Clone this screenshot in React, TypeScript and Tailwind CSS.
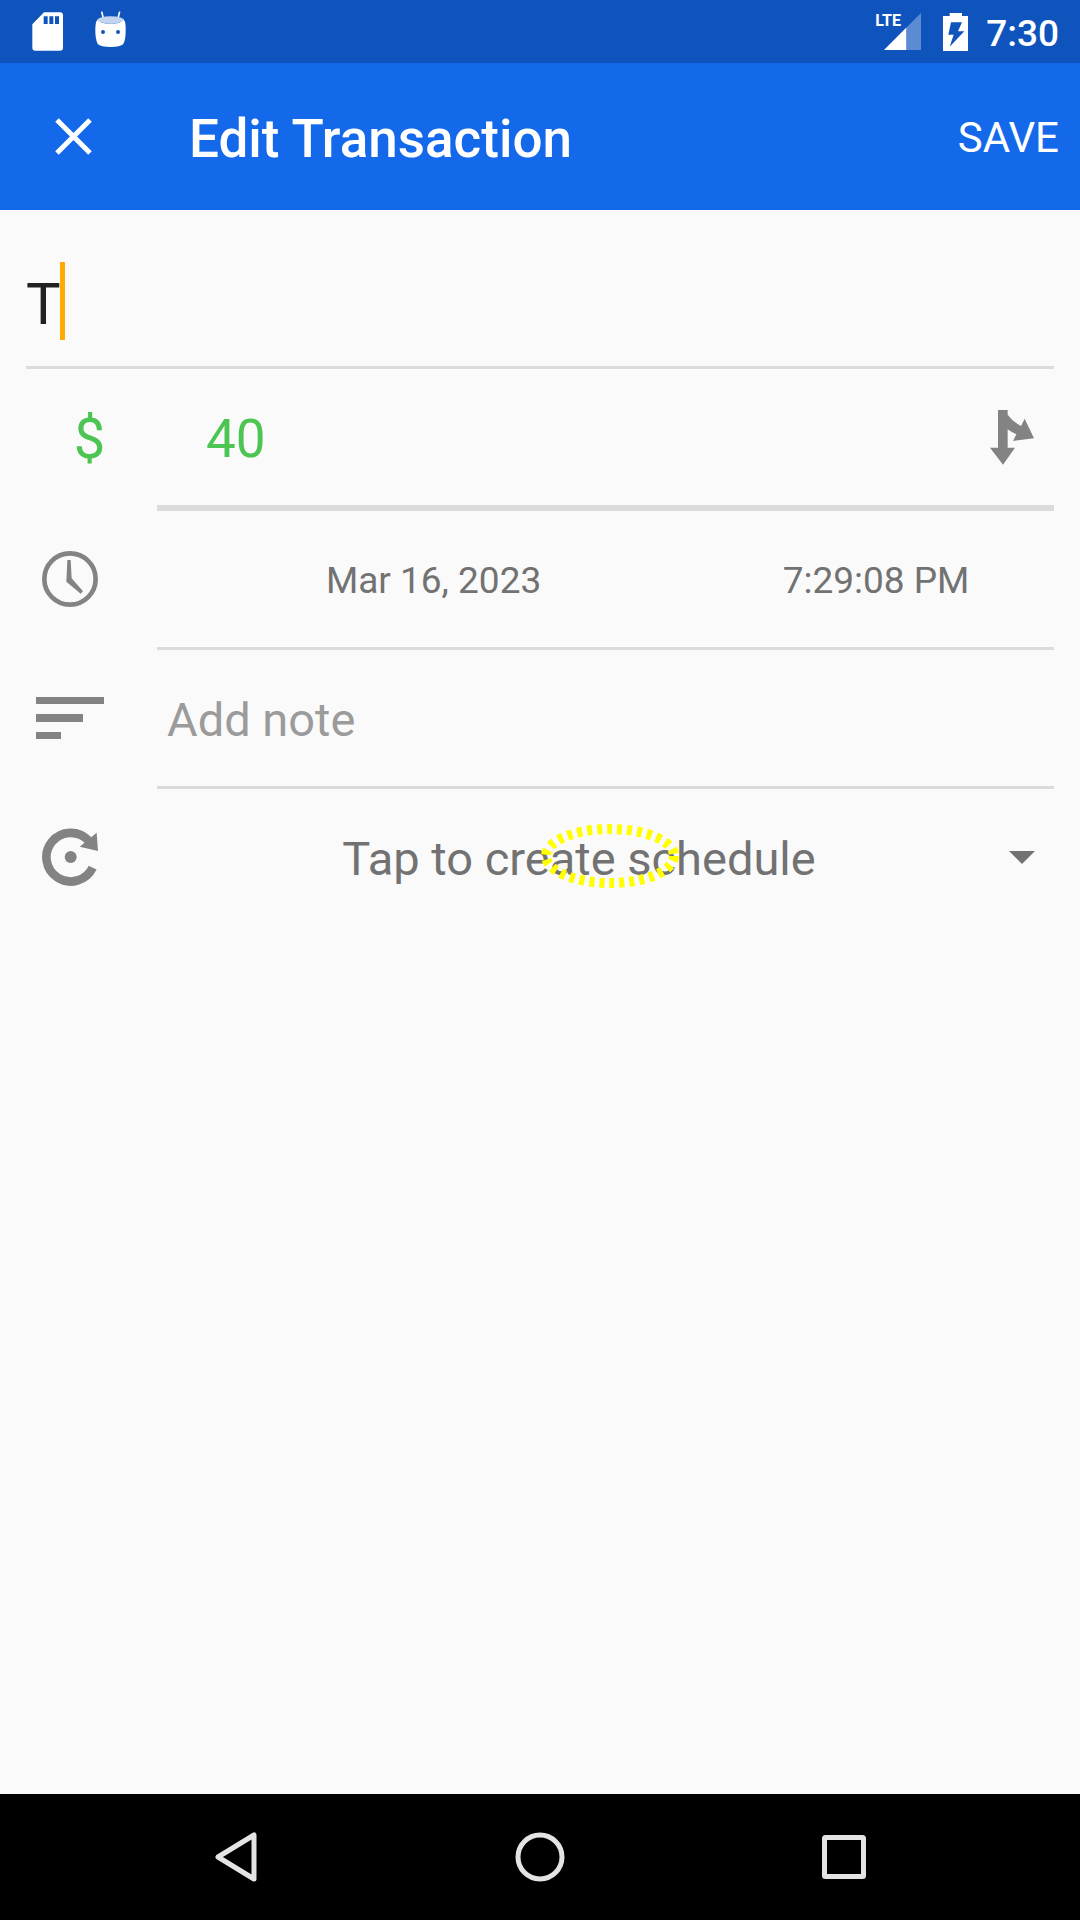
import React from 'react';

function StatusBar() {
  return (
    <div className="flex h-[63px] items-center justify-between bg-[#0f54bd] pl-8 pr-[21px] text-white">
      <div className="flex items-center gap-8">
        <svg className="h-[39px] w-[31px]" viewBox="0 0 93 117" aria-label="SD card" role="img">
          <path
            fill="#fff"
            fillRule="evenodd"
            d="M36 1H84Q93 1 93 10V107Q93 116 84 116H10Q1 116 1 107V37ZM35 13V36H47V13ZM52 13V36H64V13ZM69 13V36H81V13Z"
          />
        </svg>
        <svg className="-mt-1 h-[37px] w-[31px]" viewBox="0 0 93 111" aria-label="Android" role="img">
          <path d="M20 2L26 26M74 2L68 26" stroke="#fff" strokeWidth="5" />
          <ellipse cx="47" cy="27" rx="40" ry="11" fill="#c3d4ee" />
          <path
            fill="#fff"
            fillRule="evenodd"
            d="M7 27Q14 38 47 38Q80 38 86 27Q92 29 92 52Q93 84 85 99Q76 108 47 108Q17 108 8 99Q0 82 1 52Q2 30 7 27ZM24 57A6 6 0 1 0 24 69A6 6 0 1 0 24 57ZM69 57A6 6 0 1 0 69 69A6 6 0 1 0 69 57Z"
          />
        </svg>
      </div>
      <div className="flex items-center">
        <div className="relative h-[37px] w-[46px]">
          <svg className="ml-2 h-[37px] w-[37px]" viewBox="0 0 110 110" aria-label="Signal" role="img">
            <path d="M0 110L110 0V110Z" fill="#5b8bd2" />
            <path d="M0 110L66 44V110Z" fill="#fff" />
          </svg>
          <span className="absolute -left-px top-0 text-base font-bold leading-4">LTE</span>
        </div>
        <svg className="ml-[21px] h-[38px] w-[25px]" viewBox="0 0 75 114" aria-label="Battery charging" role="img">
          <path
            fill="#fff"
            fillRule="evenodd"
            d="M20 0H57V9H75V114H0V9H20ZM24 28L16 65H32L20 101L64 55H45L57 28Z"
          />
        </svg>
        <span className="ml-[18px] pt-[3px] text-[37px] font-medium leading-none">7:30</span>
      </div>
    </div>
  );
}

function Toolbar() {
  return (
    <header className="flex h-[147px] items-center bg-[#1469eb] pl-[55px] pr-[21px] text-white">
      <button type="button" aria-label="Close" className="mr-[97px]">
        <svg className="h-[37px] w-[37px]" viewBox="0 0 37 37">
          <path d="M2 2L35 35M35 2L2 35" stroke="#fff" strokeWidth="5" />
        </svg>
      </button>
      <h1 className="flex-1 pt-1.5 text-[53px] font-medium leading-none">Edit Transaction</h1>
      <button type="button" className="pt-[3px] text-[42px] leading-none">
        SAVE
      </button>
    </header>
  );
}

function Row({
  icon,
  thick = false,
  last = false,
  children,
}: {
  icon: React.ReactNode;
  thick?: boolean;
  last?: boolean;
  children: React.ReactNode;
}) {
  return (
    <div className="flex">
      <div className="flex h-[136px] w-[131px] shrink-0 items-center">{icon}</div>
      <div
        className={`relative flex min-w-0 flex-1 items-center border-[#dbdbdb] ${
          last ? 'h-[136px]' : thick ? 'h-[142px] border-b-[6px]' : 'h-[139px] border-b-[3px]'
        }`}
      >
        {children}
      </div>
    </div>
  );
}

function ClockIcon() {
  return (
    <svg className="ml-4 h-14 w-14" viewBox="0 0 168 168" aria-hidden="true">
      <circle cx="84" cy="84" r="77" fill="none" stroke="#838383" strokeWidth="14" />
      <path d="M76 27H86L89 82L123 121L116 128L73 92Z" fill="#838383" />
    </svg>
  );
}

function NoteIcon() {
  return (
    <svg className="ml-[10px] h-[42px] w-[68px]" viewBox="0 0 68 42" aria-hidden="true">
      <path d="M0 0H68V7H0ZM0 17H47V25H0ZM0 35H25V42H0Z" fill="#838383" />
    </svg>
  );
}

function RepeatIcon() {
  return (
    <svg className="ml-4 h-[58px] w-14" viewBox="0 0 168 174" aria-hidden="true">
      <path d="M152 119A73 73 0 1 1 139 37" fill="none" stroke="#838383" strokeWidth="26" />
      <path d="M164 14L168 69L113 56Z" fill="#838383" />
      <circle cx="86" cy="87" r="18" fill="#838383" />
    </svg>
  );
}

export default function App() {
  return (
    <div className="flex min-h-screen flex-col bg-[#fafafa] font-['Roboto',sans-serif] text-[#727272]">
      <StatusBar />
      <Toolbar />
      <main className="flex-1 px-[26px]">
        <div className="relative border-b-[3px] border-[#dbdbdb] pb-5 pt-[52px]">
          <input
            aria-label="Description"
            defaultValue="T"
            className="block h-[84px] w-full bg-transparent text-[58px] text-[#212121] outline-none"
          />
          <span className="absolute left-[34px] top-[52px] h-[78px] w-[5px] bg-[#ffab00]" />
        </div>

        <Row
          thick
          icon={
            <label htmlFor="amount" className="w-full pr-1 pt-1 text-center text-[56px] leading-none text-[#4cc552]">
              $
            </label>
          }
        >
          <input
            id="amount"
            defaultValue="40"
            className="h-full min-w-0 flex-1 bg-transparent pl-[49px] pt-1 text-[53px] text-[#4cc552] outline-none"
          />
          <button type="button" aria-label="Split transaction" className="mr-5">
            <svg className="h-[55px] w-11" viewBox="0 0 132 165">
              <path
                fill="#838383"
                d="M24 0H53V14Q68 35 93 48L104 26L132 85L69 93L79 73Q66 68 53 58V113H75L39 164L0 113H24Z"
              />
            </svg>
          </button>
        </Row>

        <Row icon={<ClockIcon />}>
          <div className="grid h-full flex-1 grid-cols-[5fr_3fr] pr-3 pt-1 text-[37px]">
            <button type="button">Mar 16, 2023</button>
            <button type="button">7:29:08 PM</button>
          </div>
        </Row>

        <Row icon={<NoteIcon />}>
          <input
            aria-label="Note"
            placeholder="Add note"
            className="h-full min-w-0 flex-1 bg-transparent pl-[10px] pt-0.5 text-[47px] outline-none placeholder:text-[#9b9b9b]"
          />
        </Row>

        <Row last icon={<RepeatIcon />}>
          <select
            aria-label="Schedule"
            className="h-full w-full appearance-none bg-transparent pr-[53px] pt-1 text-[47px] outline-none [text-align-last:center]"
          >
            <option>Tap to create schedule</option>
          </select>
          <svg
            className="pointer-events-none absolute right-[19px] h-[13px] w-[26px]"
            viewBox="0 0 26 13"
            aria-hidden="true"
          >
            <path d="M0 0H26L13 13Z" fill="#727272" />
          </svg>
          <svg
            className="pointer-events-none absolute left-[384px] top-[35px] h-16 w-[138px]"
            viewBox="0 0 138 64"
            aria-hidden="true"
          >
            <ellipse
              cx="69"
              cy="32"
              rx="64"
              ry="27"
              fill="none"
              stroke="#ffff00"
              strokeWidth="10"
              strokeDasharray="5 5"
            />
          </svg>
        </Row>
      </main>

      <nav className="flex h-[126px] bg-black px-[84px]">
        <button type="button" aria-label="Back" className="flex flex-1 items-center justify-center">
          <svg className="h-[50px] w-[42px]" viewBox="0 0 42 50">
            <path d="M39 3V47L3 25Z" fill="none" stroke="#e4e4e4" strokeWidth="5" strokeLinejoin="round" />
          </svg>
        </button>
        <button type="button" aria-label="Home" className="flex flex-1 items-center justify-center">
          <svg className="h-[50px] w-[50px]" viewBox="0 0 50 50">
            <circle cx="25" cy="25" r="22" fill="none" stroke="#e4e4e4" strokeWidth="5" />
          </svg>
        </button>
        <button type="button" aria-label="Recent apps" className="flex flex-1 items-center justify-center">
          <svg className="h-11 w-11" viewBox="0 0 44 44">
            <rect x="2.5" y="2.5" width="39" height="39" rx="1" fill="none" stroke="#e4e4e4" strokeWidth="5" strokeLinejoin="round" />
          </svg>
        </button>
      </nav>
    </div>
  );
}
